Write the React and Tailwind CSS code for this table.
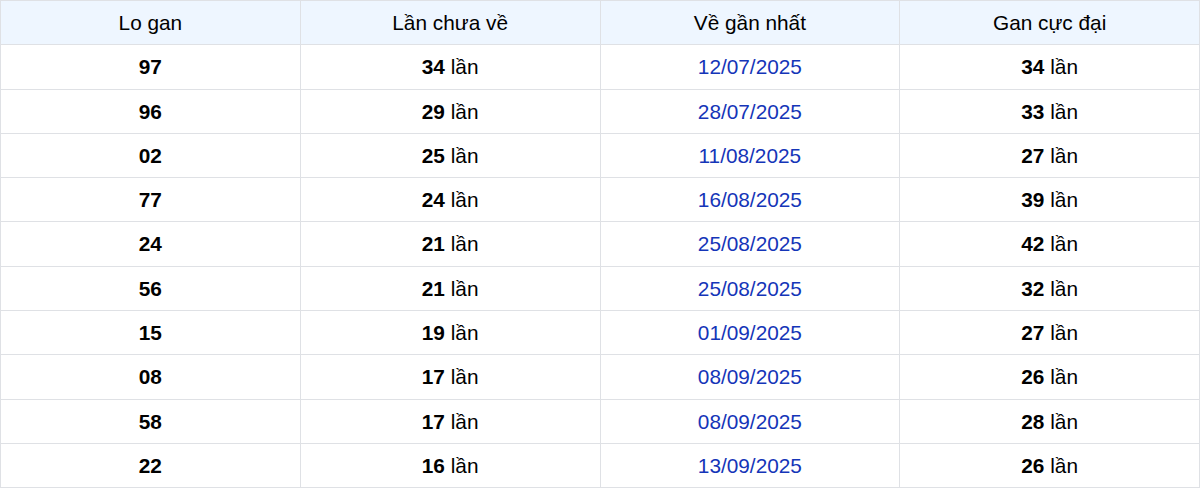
import React from "react";

const rows = [
  ["97", "34", "12/07/2025", "34"],
  ["96", "29", "28/07/2025", "33"],
  ["02", "25", "11/08/2025", "27"],
  ["77", "24", "16/08/2025", "39"],
  ["24", "21", "25/08/2025", "42"],
  ["56", "21", "25/08/2025", "32"],
  ["15", "19", "01/09/2025", "27"],
  ["08", "17", "08/09/2025", "26"],
  ["58", "17", "08/09/2025", "28"],
  ["22", "16", "13/09/2025", "26"],
];

const cell = "border border-[#dfe1e5] py-[10px] leading-[23.3px] text-center";

export default function App() {
  return (
    <div className="w-[1200px] bg-white font-['Liberation_Sans',Arial,sans-serif] text-[20.8px] text-black">
      <table className="w-full table-fixed border-collapse">
        <thead>
          <tr className="bg-[#eef6ff]">
            <th className={`${cell} font-normal`}>Lo gan</th>
            <th className={`${cell} font-normal`}>Lần chưa về</th>
            <th className={`${cell} font-normal`}>Về gần nhất</th>
            <th className={`${cell} font-normal`}>Gan cực đại</th>
          </tr>
        </thead>
        <tbody>
          {rows.map(([lo, chua, ngay, cucdai], i) => (
            <tr key={i}>
              <td className={`${cell} font-bold`}>{lo}</td>
              <td className={cell}>
                <b>{chua}</b> lần
              </td>
              <td className={`${cell} text-[#1535b8]`}>{ngay}</td>
              <td className={cell}>
                <b>{cucdai}</b> lần
              </td>
            </tr>
          ))}
        </tbody>
      </table>
    </div>
  );
}
